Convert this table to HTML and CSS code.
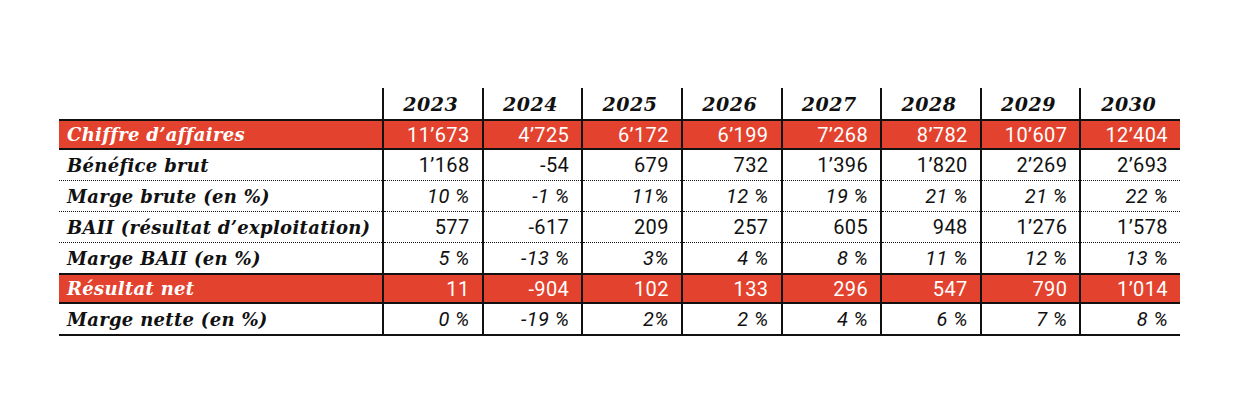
FILE: index.html
```html
<!DOCTYPE html>
<html lang="fr">
<head>
    <meta charset="UTF-8">
    <title>Compte de résultat prévisionnel</title>
    <link rel="stylesheet" href="styles.css">
</head>
<body>
    <div class="page">
        <table class="results">
            <thead>
                <tr>
                    <th class="label"></th>
                    <th>2023</th>
                    <th>2024</th>
                    <th>2025</th>
                    <th>2026</th>
                    <th>2027</th>
                    <th>2028</th>
                    <th>2029</th>
                    <th>2030</th>
                </tr>
            </thead>
            <tbody>
                <tr class="highlight">
                    <td class="label">Chiffre d’affaires</td>
                    <td>11’673</td><td>4’725</td><td>6’172</td><td>6’199</td>
                    <td>7’268</td><td>8’782</td><td>10’607</td><td>12’404</td>
                </tr>
                <tr>
                    <td class="label">Bénéfice brut</td>
                    <td>1’168</td><td>-54</td><td>679</td><td>732</td>
                    <td>1’396</td><td>1’820</td><td>2’269</td><td>2’693</td>
                </tr>
                <tr class="pct">
                    <td class="label">Marge brute (en %)</td>
                    <td>10 %</td><td>-1 %</td><td>11%</td><td>12 %</td>
                    <td>19 %</td><td>21 %</td><td>21 %</td><td>22 %</td>
                </tr>
                <tr>
                    <td class="label">BAII (résultat d’exploitation)</td>
                    <td>577</td><td>-617</td><td>209</td><td>257</td>
                    <td>605</td><td>948</td><td>1’276</td><td>1’578</td>
                </tr>
                <tr class="pct">
                    <td class="label">Marge BAII (en %)</td>
                    <td>5 %</td><td>-13 %</td><td>3%</td><td>4 %</td>
                    <td>8 %</td><td>11 %</td><td>12 %</td><td>13 %</td>
                </tr>
                <tr class="highlight">
                    <td class="label">Résultat net</td>
                    <td>11</td><td>-904</td><td>102</td><td>133</td>
                    <td>296</td><td>547</td><td>790</td><td>1’014</td>
                </tr>
                <tr class="pct last">
                    <td class="label">Marge nette (en %)</td>
                    <td>0 %</td><td>-19 %</td><td>2%</td><td>2 %</td>
                    <td>4 %</td><td>6 %</td><td>7 %</td><td>8 %</td>
                </tr>
            </tbody>
        </table>
    </div>
</body>
</html>
```

FILE: styles.css
```css
body {
    margin: 0;
    background: #fff;
}

.page {
    padding: 88px 0 0 59px;
}

.results {
    border-collapse: collapse;
    width: 1121px;
    table-layout: fixed;
}

.results th,
.results td {
    padding: 0 12px 0 0;
    border-left: 2px solid #111;
    color: #111;
}

.results .label {
    width: 315px;
    border-left: none;
    padding: 0 0 0 8px;
    text-align: left;
    font-family: "DejaVu Serif", serif;
    font-weight: bold;
    font-style: italic;
    font-size: 18px;
    letter-spacing: 0.3px;
}

.results th {
    height: 31px;
    padding: 0 4px 0 0;
    border-bottom: 2px solid #111;
    text-align: center;
    font-family: "DejaVu Serif", serif;
    font-weight: bold;
    font-style: italic;
    font-size: 19px;
    letter-spacing: 0.5px;
}

.results td {
    height: 30px;
    border-bottom: 1px dotted #111;
    text-align: right;
    font-family: Roboto, "DejaVu Sans", sans-serif;
    font-size: 20px;
    letter-spacing: 0.4px;
}

.results .pct td {
    font-style: italic;
}

.results .highlight td {
    height: 27px;
    background: #e3432e;
    color: #fff;
    border-top: 2px solid #111;
    border-bottom: 2px solid #111;
}

.results .last td {
    border-bottom: 2px solid #111;
}
```
